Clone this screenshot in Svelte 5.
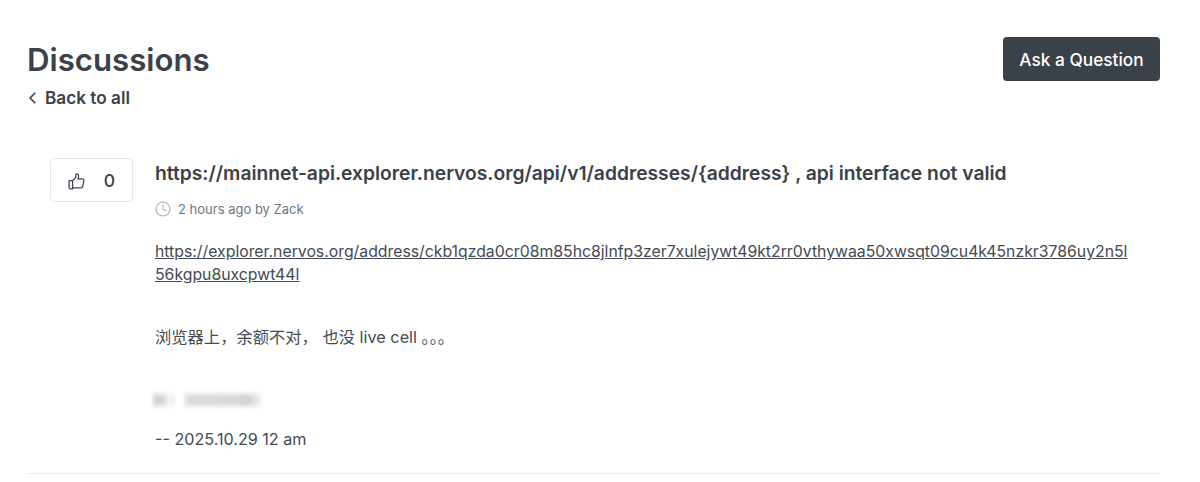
<script>
  const link = "https://explorer.nervos.org/address/ckb1qzda0cr08m85hc8jlnfp3zer7xulejywt49kt2rr0vthywaa50xwsqt09cu4k45nzkr3786uy2n5l56kgpu8uxcpwt44l";
  const note = "浏览器上\uFF0C余额不对\uFF0C 也没 live cell 。。。";
</script>

<div class="page">
  <header class="top">
    <div>
      <h1>Discussions</h1>
      <a class="back" href="#back">
        <svg width="12" height="12" viewBox="0 0 12 12" fill="none" stroke="#3a4149" stroke-width="1.6" stroke-linecap="round" stroke-linejoin="round"><path d="M7.8 1.2 3 6l4.8 4.8"/></svg>
        <span>Back to all</span>
      </a>
    </div>
    <button class="ask">Ask a Question</button>
  </header>

  <article class="post">
    <div class="vote">
      <svg width="19" height="19" viewBox="0 0 18 18" fill="none" stroke="#3f4750" stroke-width="1.2" stroke-linejoin="round" stroke-linecap="round">
        <path d="M5.3 8.2 8.4 5V2.6c0-.6.5-1 1-.9 1 .2 1.6 1 1.6 2 0 .9-.3 1.9-.6 2.8h4.3c.9 0 1.5.8 1.3 1.6l-1.1 5.5c-.2.9-.9 1.4-1.7 1.4H5.3"/>
        <path d="M2 8.2h3.3v7.8H3.2c-.7 0-1.2-.5-1.2-1.2Z"/>
      </svg>
      <span>0</span>
    </div>
    <div class="body">
      <h2>https://mainnet-api.explorer.nervos.org/api/v1/addresses/&#123;address&#125; , api interface not valid</h2>
      <div class="meta">
        <svg width="16" height="16" viewBox="0 0 16 16" fill="none" stroke="#a9afb8" stroke-width="1.1" stroke-linecap="round" stroke-linejoin="round"><circle cx="8" cy="8" r="7"/><path d="M8 3.8V8l2.8 1.8"/></svg>
        <span>2 hours ago by Zack</span>
      </div>
      <p class="link"><a href="#link">{link}</a></p>
      <p class="cn">{note}</p>
      <div class="redacted" aria-hidden="true">
        <i class="a"></i><i class="b"></i><i class="c"></i>
      </div>
      <p class="sign">-- 2025.10.29 12 am</p>
    </div>
  </article>
</div>

<style>
  :global(body) {
    margin: 0;
    background: #fff;
  }
  .page {
    box-sizing: border-box;
    width: 1200px;
    height: 482px;
    padding: 37px 40px 0 27px;
    font-family: Inter, "Noto Sans CJK SC", sans-serif;
    color: #3a4149;
    overflow: hidden;
  }
  .top {
    display: flex;
    justify-content: space-between;
    align-items: flex-start;
  }
  h1 {
    margin: 0;
    font-size: 31.2px;
    line-height: 46px;
    font-weight: 600;
  }
  .back {
    display: flex;
    align-items: center;
    gap: 6px;
    margin-top: 4px;
    font-size: 17.2px;
    line-height: 22px;
    font-weight: 600;
    color: #3a4149;
    text-decoration: none;
  }
  .ask {
    box-sizing: border-box;
    width: 157px;
    height: 44px;
    border: 0;
    border-radius: 4px;
    background: #3a4149;
    color: #fff;
    font: 500 17.3px Inter, sans-serif;
  }
  .post {
    display: flex;
    gap: 22px;
    margin-top: 49px;
    padding: 0 0 22px 23px;
    border-bottom: 1px solid #e9ebee;
  }
  .vote {
    box-sizing: border-box;
    flex: none;
    display: flex;
    align-items: center;
    justify-content: space-between;
    width: 83px;
    height: 44px;
    padding: 0 17px 0 16px;
    border: 1px solid #e5e7ea;
    border-radius: 4px;
    font-size: 17.5px;
    font-weight: 500;
  }
  .vote svg {
    margin-top: 2px;
  }
  .body {
    flex: 1;
    min-width: 0;
  }
  h2 {
    margin: 1px 0 0;
    font-size: 19.25px;
    line-height: 28px;
    font-weight: 600;
    white-space: nowrap;
  }
  .meta {
    display: flex;
    align-items: center;
    gap: 7px;
    margin-top: 13px;
    font-size: 13px;
    line-height: 18px;
    color: #6e7682;
  }
  p {
    margin: 0;
    font-size: 15.8px;
    line-height: 23px;
    color: #434a53;
  }
  .link {
    margin-top: 22px;
    padding-right: 28px;
    word-break: break-all;
  }
  .link a {
    color: #434a53;
    text-decoration: underline;
  }
  .cn {
    margin-top: 40px;
    font-size: 16.3px;
  }
  .redacted {
    display: flex;
    align-items: center;
    height: 14px;
    margin-top: 44px;
    margin-left: -2px;
    filter: blur(2px);
  }
  .redacted i {
    display: block;
    height: 12px;
  }
  .redacted .a {
    width: 12px;
    background: #d3d3d3;
  }
  .redacted .b {
    width: 10px;
    background: #f0f0f0;
  }
  .redacted .c {
    width: 76px;
    margin-left: 10px;
    background: linear-gradient(90deg, #dcdcdc, #d8d8d8 70%, #cfcfcf 80%, #f0f0f0);
  }
  .sign {
    margin-top: 21px;
    font-size: 16.15px;
  }
</style>
